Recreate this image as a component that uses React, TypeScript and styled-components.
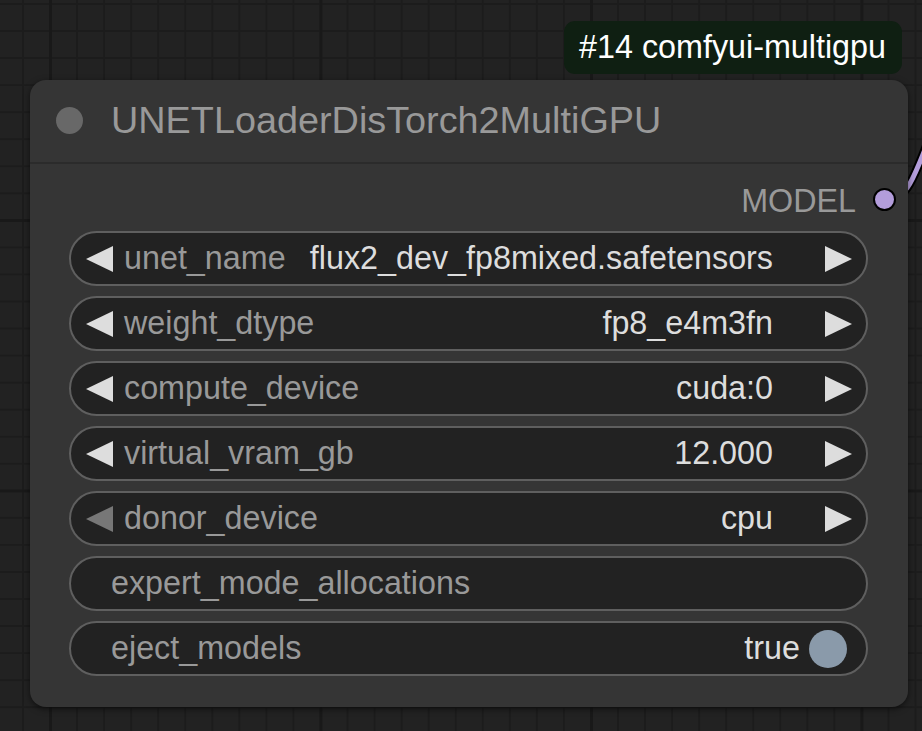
import React from 'react';
import styled, { createGlobalStyle } from 'styled-components';

const GlobalStyle = createGlobalStyle`
  html, body {
    margin: 0;
    padding: 0;
    width: 922px;
    height: 731px;
    overflow: hidden;
    background: #222222;
  }
  * { box-sizing: border-box; }
`;

// canvas with minor / major grid lines
const Canvas = styled.div`
  position: relative;
  width: 922px;
  height: 731px;
  overflow: hidden;
  padding: 21px 0 0 30px;
  font-family: "Liberation Sans", Arial, sans-serif;
  background-color: #222222;
  background-image:
    linear-gradient(to right, #191919 0, #191919 3px, transparent 3px),
    linear-gradient(to bottom, #191919 0, #191919 3px, transparent 3px),
    linear-gradient(to right, #1c1c1c 0, #1c1c1c 2px, transparent 2px),
    linear-gradient(to bottom, #1c1c1c 0, #1c1c1c 2px, transparent 2px);
  background-size: 270.5px 270.5px, 270.5px 270.5px, 27.05px 27.05px, 27.05px 27.05px;
  background-position: 49px 0, 0 219px, 22px 0, 0 3px;
`;

const LinkLayer = styled.svg`
  position: absolute;
  left: 0;
  top: 0;
  width: 922px;
  height: 731px;
  pointer-events: none;
`;

const NodeColumn = styled.div`
  position: relative;
  display: flex;
  flex-direction: column;
  align-items: flex-end;
  width: 878px;
  gap: 6px;
`;

const Badge = styled.div`
  height: 53px;
  padding: 0 16px 0 15px;
  margin-right: 6px;
  display: flex;
  align-items: center;
  background: #0f1f12;
  border-radius: 11px;
  color: #ffffff;
  font-size: 32.3px;
`;

const Node = styled.div`
  width: 878px;
  height: 627px;
  background: #353535;
  border-radius: 16px;
  box-shadow: 0 2px 6px rgba(0, 0, 0, 0.55);
  display: flex;
  flex-direction: column;
`;

const TitleBar = styled.div`
  height: 84px;
  display: flex;
  align-items: center;
  gap: 28px;
  padding: 0 0 2px 26px;
  border-bottom: 2px solid #2b2b2b;
`;

const TitleDot = styled.span`
  width: 27px;
  height: 27px;
  border-radius: 50%;
  background: #686868;
`;

const Title = styled.span`
  color: #999999;
  font-size: 37.8px;
  white-space: nowrap;
`;

const Body = styled.div`
  display: flex;
  flex-direction: column;
  padding: 0 40px 0 39px;
`;

const OutputRow = styled.div`
  height: 56px;
  margin: 9px -28px 2px 0;
  display: flex;
  align-items: center;
  justify-content: flex-end;
  gap: 17px;
`;

const SlotLabel = styled.span`
  color: #999999;
  font-size: 32.3px;
`;

const SlotDot = styled.span`
  width: 23px;
  height: 23px;
  border-radius: 50%;
  background: #b39ddb;
  border: 2.5px solid #000000;
  margin-top: -4px;
`;

const WidgetList = styled.div`
  display: flex;
  flex-direction: column;
  gap: 10px;
`;

const Widget = styled.div<{ $plain?: boolean }>`
  height: 55px;
  border: 2px solid #5f5f5f;
  border-radius: 28px;
  background: #222222;
  display: flex;
  align-items: center;
  padding: ${p => (p.$plain ? '0 19px 0 40px' : '0 14px 0 15px')};
  font-size: 32.3px;
  white-space: nowrap;
`;

const Label = styled.span<{ $gap?: boolean }>`
  color: #999999;
  margin-left: ${p => (p.$gap ? '11px' : '0')};
`;

const Value = styled.span`
  color: #dddddd;
  margin-left: auto;
`;

const ArrowBox = styled.svg<{ $right?: boolean }>`
  width: 27px;
  height: 26px;
  flex: none;
  margin-left: ${p => (p.$right ? '52px' : '0')};
`;

const Toggle = styled.span`
  width: 38px;
  height: 38px;
  border-radius: 50%;
  background: #8a9aaa;
  margin-left: 9px;
`;

const Arrow = ({ right, dim }: { right?: boolean; dim?: boolean }) => (
  <ArrowBox $right={right} viewBox="0 0 27 26">
    <polygon
      points={right ? '0,0 27,13 0,26' : '27,0 27,26 0,13'}
      fill={dim ? '#777777' : '#dddddd'}
    />
  </ArrowBox>
);

const combos = [
  { name: 'unet_name', value: 'flux2_dev_fp8mixed.safetensors' },
  { name: 'weight_dtype', value: 'fp8_e4m3fn' },
  { name: 'compute_device', value: 'cuda:0' },
  { name: 'virtual_vram_gb', value: '12.000' },
  { name: 'donor_device', value: 'cpu', dimLeft: true },
];

const linkPath = 'M 884 199 C 910 199, 912 180, 936 122';

const App = () => {
  return (
    <Canvas>
      <GlobalStyle />
      <LinkLayer viewBox="0 0 922 731">
        <path d={linkPath} stroke="#000000" strokeWidth="9" fill="none" />
        <path d={linkPath} stroke="#b39ddb" strokeWidth="5" fill="none" />
      </LinkLayer>
      <NodeColumn>
        <Badge>#14 comfyui-multigpu</Badge>
        <Node>
          <TitleBar>
            <TitleDot />
            <Title>UNETLoaderDisTorch2MultiGPU</Title>
          </TitleBar>
          <Body>
            <OutputRow>
              <SlotLabel>MODEL</SlotLabel>
              <SlotDot />
            </OutputRow>
            <WidgetList>
              {combos.map(c => (
                <Widget key={c.name}>
                  <Arrow dim={c.dimLeft} />
                  <Label $gap>{c.name}</Label>
                  <Value>{c.value}</Value>
                  <Arrow right />
                </Widget>
              ))}
              <Widget $plain>
                <Label>expert_mode_allocations</Label>
              </Widget>
              <Widget $plain>
                <Label>eject_models</Label>
                <Value>true</Value>
                <Toggle />
              </Widget>
            </WidgetList>
          </Body>
        </Node>
      </NodeColumn>
    </Canvas>
  );
};

export default App;
